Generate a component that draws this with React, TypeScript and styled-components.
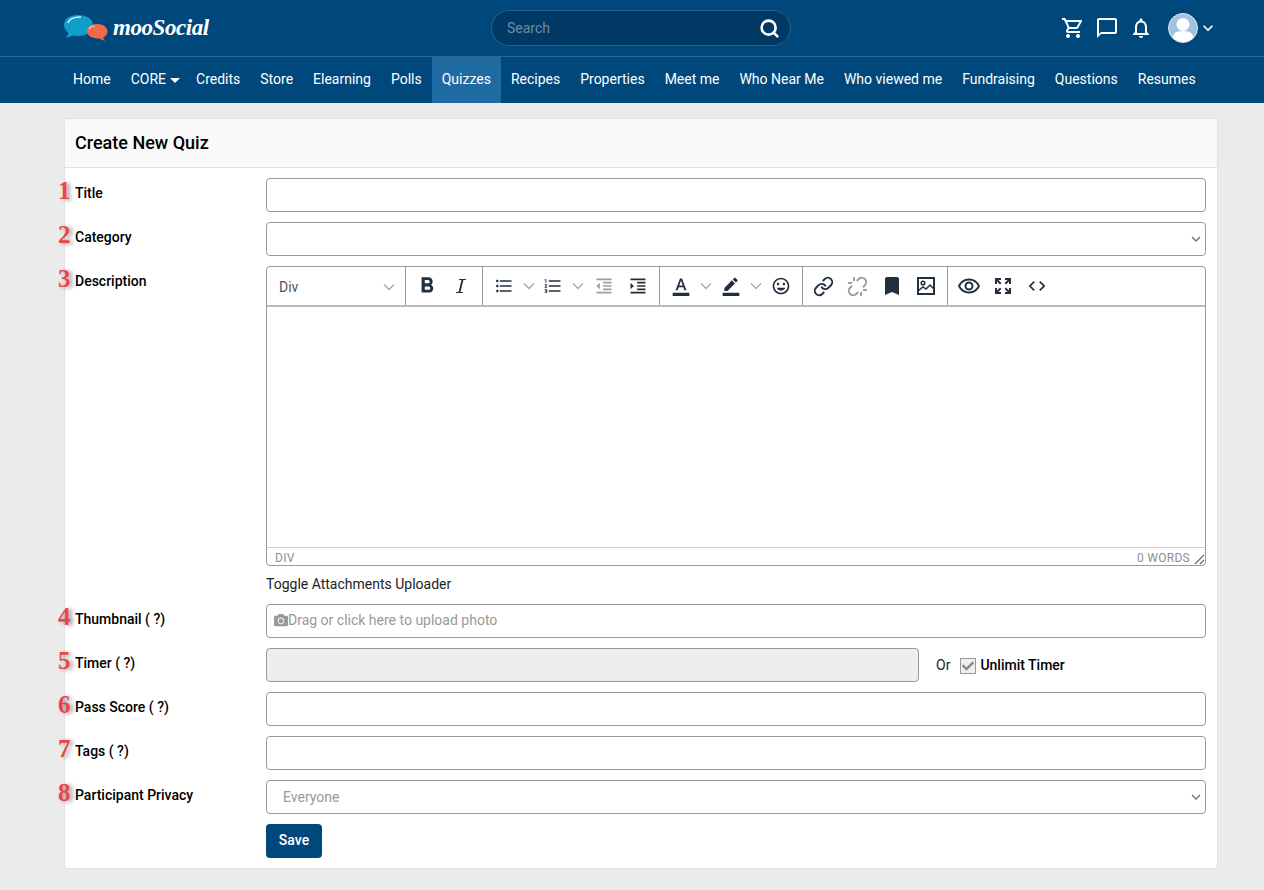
import React from 'react'
import styled, { createGlobalStyle } from 'styled-components'
import {
  MdOutlineShoppingCart,
  MdChatBubbleOutline,
  MdOutlineNotifications,
  MdKeyboardArrowDown,
  MdFormatBold,
  MdFormatListBulleted,
  MdFormatListNumbered,
  MdFormatIndentDecrease,
  MdFormatIndentIncrease,
  MdFormatColorText,
  MdBorderColor,
  MdOutlineInsertEmoticon,
  MdBookmark,
  MdOutlineRemoveRedEye,
  MdCode,
} from 'react-icons/md'
import { FaCamera, FaCheck } from 'react-icons/fa'
import { Link, Search, Unlink } from 'lucide-react'

const GlobalStyle = createGlobalStyle`
  html, body {
    margin: 0;
    padding: 0;
    background: #ebebeb;
    font-family: Roboto, "Liberation Sans", sans-serif;
    color: #000;
  }
  * { box-sizing: border-box; }
`

const TopBar = styled.div`
  height: 57px;
  background: #00487b;
  border-bottom: 1px solid #2c6a96;
  display: flex;
  align-items: center;
  padding: 0 46px 0 64px;
`

const LogoWrap = styled.div`
  width: 427px;
  display: flex;
  align-items: center;
  gap: 5px;
`

const LogoText = styled.span`
  font-family: "Liberation Serif", serif;
  font-style: italic;
  font-weight: 700;
  font-size: 23px;
  letter-spacing: -0.45px;
  color: #fff;
`

const SearchBox = styled.div`
  width: 300px;
  height: 36px;
  border-radius: 18px;
  background: #003a64;
  border: 1px solid #26628e;
  display: flex;
  align-items: center;
  justify-content: space-between;
  padding: 0 10px 0 15px;
  color: #fff;
`

const SearchInput = styled.input`
  flex: 1;
  min-width: 0;
  border: 0;
  padding: 0;
  background: transparent;
  outline: none;
  font: 14px Roboto, sans-serif;
  color: #fff;
  &::placeholder { color: #6b8ea8; opacity: 1; }
`

const TopIcons = styled.div`
  margin-left: auto;
  display: flex;
  align-items: center;
  color: #fff;
`

const TopIcon = styled.span<{ $gap: number }>`
  display: flex;
  margin-right: ${p => p.$gap}px;
`

const Avatar = styled.span`
  width: 30px;
  height: 30px;
  border-radius: 50%;
  border: 1px solid #dfe9f3;
  background: #a3c2e2;
  overflow: hidden;
  display: block;
`

const NavBar = styled.nav`
  height: 46px;
  background: #00487b;
  display: flex;
  padding-left: 63px;
`

const NavItem = styled.a<{ $active?: boolean }>`
  display: flex;
  align-items: center;
  gap: 4px;
  padding: 0 10px 2px;
  font-size: 14px;
  font-weight: 450;
  color: #fff;
  background: ${p => (p.$active ? '#1f6aa0' : 'transparent')};
`

const Caret = styled.span`
  width: 0;
  height: 0;
  border-left: 5px solid transparent;
  border-right: 5px solid transparent;
  border-top: 5px solid #fff;
  margin: 2px -4px 0 0;
`

const Page = styled.main`
  padding: 15px 46px 21px 64px;
`

const Card = styled.section`
  background: #fff;
  border: 1px solid #e2e2e2;
  border-radius: 4px;
`

const CardHeader = styled.header`
  height: 49px;
  background: #f9f9f9;
  border-bottom: 1px solid #e2e2e2;
  border-radius: 4px 4px 0 0;
  display: flex;
  align-items: center;
  padding: 0 0 2px 10px;
  font-size: 18px;
  font-weight: 500;
`

const Form = styled.form`
  padding: 10px 11px 10px 10px;
  display: flex;
  flex-direction: column;
  gap: 10px;
`

const Row = styled.div`
  display: grid;
  grid-template-columns: 191px 1fr;
`

const Label = styled.label`
  position: relative;
  padding-top: 7px;
  font-size: 14px;
  font-weight: 480;
  line-height: 16px;
`

const Marker = styled.span`
  position: absolute;
  left: -17px;
  top: -1px;
  font-family: "Liberation Serif", serif;
  font-weight: 700;
  font-size: 25px;
  line-height: 28px;
  color: #ec4548;
  text-shadow: 3px 1px 4px rgba(0, 0, 0, 0.4);
`

const TextInput = styled.input`
  display: block;
  width: 100%;
  height: 34px;
  border: 1px solid #999;
  border-radius: 4px;
  background: ${p => (p.disabled ? '#eee' : '#fff')};
  outline: none;
  padding: 0 16px;
  font: 14px Roboto, sans-serif;
`

const SelectWrap = styled.div`
  position: relative;
  color: #777;
  svg {
    position: absolute;
    right: 1px;
    top: 8px;
  }
`

const Select = styled.select`
  display: block;
  width: 100%;
  height: 34px;
  border: 1px solid #999;
  border-radius: 4px;
  background: #fff;
  appearance: none;
  outline: none;
  padding: 0 16px;
  font: 14px Roboto, sans-serif;
  color: #999;
`

const Editor = styled.div`
  border: 1px solid #999;
  border-radius: 4px;
  height: 300px;
  display: flex;
  flex-direction: column;
`

const Toolbar = styled.div`
  height: 40px;
  border-bottom: 2px solid #bbb;
  display: flex;
  color: #222f3e;
`

const ToolGroup = styled.div<{ $width: number }>`
  width: ${p => p.$width}px;
  padding-left: 4px;
  display: flex;
  align-items: center;
  border-right: 1px solid #999;
  &:last-child { border-right: 0; }
`

const ParagraphPicker = styled.div`
  flex: 1;
  display: flex;
  align-items: center;
  justify-content: space-between;
  padding: 2px 10px 0 8px;
  font-size: 14px;
  color: #555;
`

const ToolButton = styled.span<{ $muted?: boolean; $width?: number; $pad?: number }>`
  width: ${p => p.$width ?? 34}px;
  height: 38px;
  display: flex;
  align-items: center;
  padding-left: ${p => p.$pad ?? 7}px;
  gap: 9px;
  flex: none;
  color: ${p => (p.$muted ? '#9a9ea3' : '#222f3e')};
`

const Chevron = styled.span`
  display: flex;
  color: #a8a8a8;
`

const EditorBody = styled.div`
  flex: 1;
`

const StatusBar = styled.div`
  position: relative;
  height: 18px;
  border-top: 1px solid #ccc;
  display: flex;
  justify-content: space-between;
  align-items: center;
  padding: 2px 15px 0 8px;
  font-size: 12px;
  letter-spacing: 0.3px;
  color: #8a8f96;
  svg {
    position: absolute;
    right: 0;
    bottom: 0;
  }
`

const ToggleLink = styled.a`
  display: block;
  height: 28px;
  padding-top: 10px;
  font-size: 14px;
  line-height: 16px;
  color: #222;
`

const UploadBox = styled.div`
  height: 34px;
  border: 1px solid #999;
  border-radius: 4px;
  display: flex;
  align-items: center;
  padding: 0 0 2px 7px;
  font-size: 14px;
  color: #999;
`

const TimerRow = styled.div`
  display: grid;
  grid-template-columns: 653px 1fr;
  align-items: center;
`

const TimerOptions = styled.div`
  display: flex;
  align-items: center;
  padding-left: 17px;
  font-size: 14px;
  line-height: 16px;
  color: #222;
`

const CheckMark = styled.span`
  width: 16px;
  height: 16px;
  margin: 2px 4px 0 10px;
  border: 1px solid #999;
  background: #eee;
  color: #888;
  display: flex;
  align-items: center;
  justify-content: center;
`

const CheckLabel = styled.span`
  font-weight: 500;
  color: #000;
`

const SaveButton = styled.button`
  width: 56px;
  height: 34px;
  border: 0;
  border-radius: 4px;
  padding: 0 0 2px;
  background: #00487b;
  color: #fff;
  font: 500 14px Roboto, sans-serif;
`

const Small = ({ children }: { children: React.ReactNode }) => (
  <svg width="24" height="24" viewBox="0 0 24 24" fill="currentColor">
    {children}
  </svg>
)

const ArrowDown = () => (
  <Chevron>
    <svg width="12" height="8" viewBox="0 0 12 8" fill="none" stroke="currentColor" strokeWidth="1.3">
      <path d="M1 1.5l5 5 5-5" />
    </svg>
  </Chevron>
)

const Logo = () => (
  <svg width="44" height="28" viewBox="0 0 44 28">
    <path d="M14 1c8 0 15 3.500 15 10s-7 11-15 11c-2 0-3 0-5-.500L2 24l2.500-5C2 17 0 14.500 0 11 0 4.500 6 1 14 1z" fill="#0d9ec9" />
    <path d="M4 9c1-4 6-6 13-6" stroke="#d9f2fa" strokeWidth="1.500" fill="none" />
    <path d="M33 10c6 0 10.500 3 10.500 7.500 0 3-2 5-4.500 6l2 3.500-6-2.500c-6 0-12-2.500-12-7S27 10 33 10z" fill="#ee6a4d" />
    <path d="M25 15c1-2 3-3 6-3" stroke="#f9c3b2" strokeWidth="1.200" fill="none" />
  </svg>
)

const items = ['Home', 'CORE', 'Credits', 'Store', 'Elearning', 'Polls', 'Quizzes', 'Recipes', 'Properties', 'Meet me', 'Who Near Me', 'Who viewed me', 'Fundraising', 'Questions', 'Resumes']

const App = () => (
  <>
    <GlobalStyle />
    <TopBar>
      <LogoWrap>
        <Logo />
        <LogoText>mooSocial</LogoText>
      </LogoWrap>
      <SearchBox>
        <SearchInput placeholder="Search" />
        <Search size={21} strokeWidth={3} />
      </SearchBox>
      <TopIcons>
        <TopIcon $gap={10}><MdOutlineShoppingCart size={24} /></TopIcon>
        <TopIcon $gap={10}><MdChatBubbleOutline size={24} /></TopIcon>
        <TopIcon $gap={15}><MdOutlineNotifications size={24} /></TopIcon>
        <Avatar>
          <svg width="28" height="28" viewBox="0 0 28 28" fill="#fff">
            <circle cx="14" cy="10.500" r="6.500" />
            <path d="M3 28c0-8 3-11 11-11s11 3 11 11z" />
          </svg>
        </Avatar>
        <MdKeyboardArrowDown size={20} />
      </TopIcons>
    </TopBar>
    <NavBar>
      {items.map(item => (
        <NavItem key={item} $active={item === 'Quizzes'}>
          {item}
          {item === 'CORE' && <Caret />}
        </NavItem>
      ))}
    </NavBar>
    <Page>
      <Card>
        <CardHeader>Create New Quiz</CardHeader>
        <Form>
          <Row>
            <Label><Marker>1</Marker>Title</Label>
            <TextInput />
          </Row>
          <Row>
            <Label><Marker>2</Marker>Category</Label>
            <SelectWrap>
              <Select />
              <MdKeyboardArrowDown size={18} />
            </SelectWrap>
          </Row>
          <Row>
            <Label><Marker>3</Marker>Description</Label>
            <div>
              <Editor>
                <Toolbar>
                  <ToolGroup $width={139}>
                    <ParagraphPicker>Div <ArrowDown /></ParagraphPicker>
                  </ToolGroup>
                  <ToolGroup $width={77}>
                    <ToolButton $pad={4}><MdFormatBold size={26} /></ToolButton>
                    <ToolButton $pad={5}>
                      <Small><path d="M10 5h7v1.100h-2.600L11.500 18h2.400v1.100H7V18h2.600l2.900-11.900H10z" /></Small>
                    </ToolButton>
                  </ToolGroup>
                  <ToolGroup $width={177}>
                    <ToolButton $width={49}><MdFormatListBulleted size={20} /><ArrowDown /></ToolButton>
                    <ToolButton $width={51}><MdFormatListNumbered size={20} /><ArrowDown /></ToolButton>
                    <ToolButton $muted><MdFormatIndentDecrease size={20} /></ToolButton>
                    <ToolButton><MdFormatIndentIncrease size={20} /></ToolButton>
                  </ToolGroup>
                  <ToolGroup $width={143}>
                    <ToolButton $width={50}><MdFormatColorText size={20} /><ArrowDown /></ToolButton>
                    <ToolButton $width={50}><MdBorderColor size={20} /><ArrowDown /></ToolButton>
                    <ToolButton><MdOutlineInsertEmoticon size={20} /></ToolButton>
                  </ToolGroup>
                  <ToolGroup $width={145}>
                    <ToolButton $pad={6}><Link size={21} strokeWidth={2.2} /></ToolButton>
                    <ToolButton $muted $pad={6}><Unlink size={21} strokeWidth={2.2} /></ToolButton>
                    <ToolButton $pad={5}><MdBookmark size={24} /></ToolButton>
                    <ToolButton $pad={5}>
                      <svg width="24" height="24" viewBox="0 0 24 24" fill="none" stroke="currentColor" strokeWidth="2">
                        <rect x="4" y="4" width="16" height="16" />
                        <circle cx="9" cy="9" r="1.800" strokeWidth="1.500" />
                        <path d="M4 17l5-4 3 2 4-4 4 4" strokeWidth="1.500" />
                      </svg>
                    </ToolButton>
                  </ToolGroup>
                  <ToolGroup $width={110}>
                    <ToolButton $pad={5}><MdOutlineRemoveRedEye size={24} /></ToolButton>
                    <ToolButton $pad={5}>
                      <Small>
                        <path d="M4 4h6v2H7.400l3 3L9 10.400l-3-3V10H4zM14 4h6v6h-2V7.400l-3 3L13.600 9l3-3H14zM4 14h2v2.600l3-3 1.400 1.400-3 3H10v2H4zM15 13.600l3 3V14h2v6h-6v-2h2.600l-3-3z" />
                      </Small>
                    </ToolButton>
                    <ToolButton><MdCode size={20} /></ToolButton>
                  </ToolGroup>
                </Toolbar>
                <EditorBody />
                <StatusBar>
                  <span>DIV</span>
                  <span>0 WORDS</span>
                  <svg width="11" height="11" viewBox="0 0 11 11" stroke="#666" strokeWidth="1.200">
                    <path d="M1 10l9-9M6 10l4-4" />
                  </svg>
                </StatusBar>
              </Editor>
              <ToggleLink>Toggle Attachments Uploader</ToggleLink>
            </div>
          </Row>
          <Row>
            <Label><Marker>4</Marker>Thumbnail ( ?)</Label>
            <UploadBox><FaCamera size={14} />Drag or click here to upload photo</UploadBox>
          </Row>
          <Row>
            <Label><Marker>5</Marker>Timer ( ?)</Label>
            <TimerRow>
              <TextInput disabled />
              <TimerOptions>
                Or
                <CheckMark><FaCheck size={12} /></CheckMark>
                <CheckLabel>Unlimit Timer</CheckLabel>
              </TimerOptions>
            </TimerRow>
          </Row>
          <Row>
            <Label><Marker>6</Marker>Pass Score ( ?)</Label>
            <TextInput />
          </Row>
          <Row>
            <Label><Marker>7</Marker>Tags ( ?)</Label>
            <TextInput />
          </Row>
          <Row>
            <Label><Marker>8</Marker>Participant Privacy</Label>
            <SelectWrap>
              <Select defaultValue="Everyone"><option>Everyone</option></Select>
              <MdKeyboardArrowDown size={18} />
            </SelectWrap>
          </Row>
          <Row>
            <span />
            <SaveButton type="button">Save</SaveButton>
          </Row>
        </Form>
      </Card>
    </Page>
  </>
)

export default App
